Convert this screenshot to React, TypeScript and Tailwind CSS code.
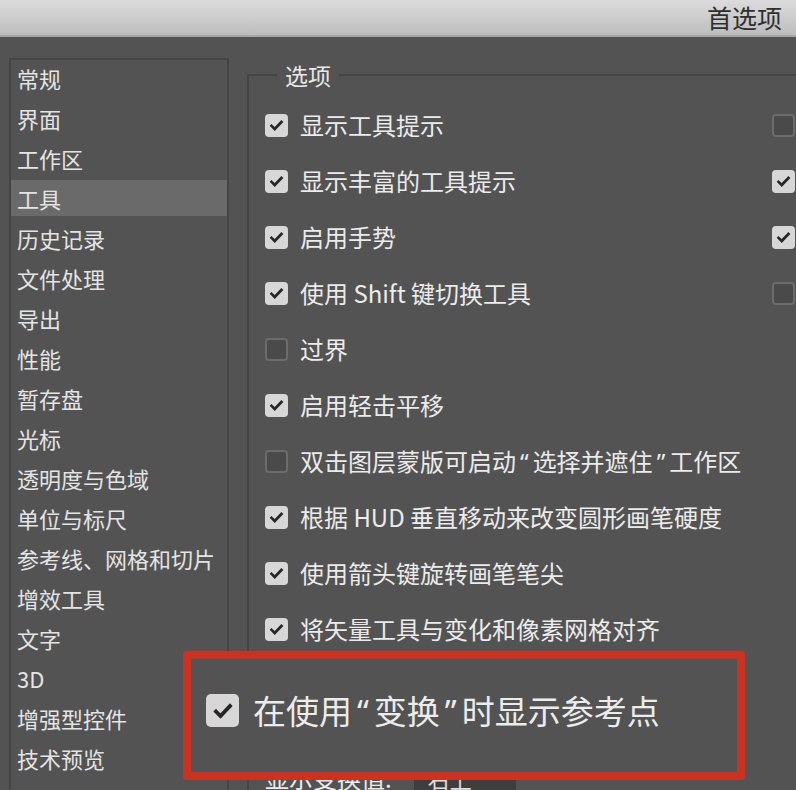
import React from 'react';

const listItems = [
  '常规', '界面', '工作区', '工具', '历史记录', '文件处理', '导出', '性能', '暂存盘',
  '光标', '透明度与色域', '单位与标尺', '参考线、网格和切片', '增效工具', '文字', '3D',
  '增强型控件', '技术预览',
];

const options: { label: string; checked: boolean; right?: boolean }[] = [
  { label: '显示工具提示', checked: true, right: false },
  { label: '显示丰富的工具提示', checked: true, right: true },
  { label: '启用手势', checked: true, right: true },
  { label: '使用 Shift 键切换工具', checked: true, right: false },
  { label: '过界', checked: false },
  { label: '启用轻击平移', checked: true },
  { label: '双击图层蒙版可启动“选择并遮住”工作区', checked: false },
  { label: '根据 HUD 垂直移动来改变圆形画笔硬度', checked: true },
  { label: '使用箭头键旋转画笔笔尖', checked: true },
  { label: '将矢量工具与变化和像素网格对齐', checked: true },
  { label: '在使用“变换”时显示参考点', checked: true },
];

// the CJK font sets quotes full width; the dialog uses tighter ones
const Label = ({ text, big }: { text: string; big?: boolean }) => (
  <>
    {text.split(/([“”])/).map((part, i) =>
      part === '“' || part === '”' ? (
        <span key={i} className={`font-['Noto_Sans',sans-serif] ${big ? 'px-[5px]' : 'px-[4px]'}`}>{part}</span>
      ) : (
        part
      )
    )}
  </>
);

const Check = ({ checked, big }: { checked: boolean; big?: boolean }) => {
  const size = big ? 'w-[33px] h-[33px] rounded-[5px]' : 'w-[23px] h-[23px] rounded-[4px]';
  if (!checked) {
    return <span className={`${size} shrink-0 border-2 border-[#6c6c6c] bg-[#4a4a4a]`} />;
  }
  return (
    <span className={`${size} shrink-0 bg-[#d7d7d7] flex items-center justify-center`}>
      <svg viewBox="0 0 24 24" className={big ? 'w-[24px] h-[24px]' : 'w-[17px] h-[17px]'}>
        <polyline points="5,12.5 9.5,17 19,7" fill="none" stroke="#262626" strokeWidth="3.8" strokeLinecap="square" />
      </svg>
    </span>
  );
};

export default function App() {
  return (
    <div className="relative w-[796px] h-[790px] overflow-hidden bg-[#535353] font-['Noto_Sans_CJK_SC',sans-serif]">
      <div className="h-[37px] border-b-2 border-[#a5a5a5] bg-linear-to-b from-[#dcdcdc] to-[#bdbdbd] flex items-center justify-end pr-[14px]">
        <span className="text-[25px] leading-none text-[#2f2f2f]">首选项</span>
      </div>

      <div className="flex pl-[9px] pt-[21px] gap-[18px]">
        <div className="w-[220px] h-[760px] shrink-0 border-2 border-[#454545] flex flex-col gap-1">
          {listItems.map((item) => (
            <div
              key={item}
              className={`h-9 px-[6px] flex items-center text-[22px] leading-none text-[#e4e4e4] ${item === '工具' ? 'bg-[#6a6a6a]' : ''}`}
            >
              {item}
            </div>
          ))}
        </div>

        <fieldset className="mt-[2px] w-[640px] shrink-0 border-2 border-[#454545] pl-[16px] pt-[7px]">
          <legend className="ml-[12px] px-[8px] text-[23px] leading-[30px] text-[#e8e8e8]">选项</legend>
          {options.map((o) => (
            <div key={o.label} className="h-14 flex items-center">
              <div className="w-[507px] flex items-center gap-[12px]">
                <Check checked={o.checked} />
                <span className="text-[24px] leading-none text-[#ebebeb] whitespace-nowrap">
                  <Label text={o.label} />
                </span>
              </div>
              {o.right !== undefined && <Check checked={o.right} />}
            </div>
          ))}
          <div className="mt-[45px] h-[40px] flex items-center gap-[22px]">
            <span className="text-[24px] leading-none text-[#ebebeb]">显示变换值:</span>
            <span className="w-[102px] h-[32px] bg-[#3e3e3e] flex items-center px-[14px] text-[22px] text-[#e0e0e0]">右上</span>
          </div>
        </fieldset>
      </div>

      <div className="absolute left-[183px] top-[651px] w-[562px] h-[129px] border-[8px] border-[#c93322] rounded-[4px] bg-[#535353] flex items-center pl-[15px] pb-[10px] gap-[14px]">
        <Check checked big />
        <span className="text-[33px] leading-none text-[#ececec] whitespace-nowrap">
          <Label text="在使用“变换”时显示参考点" big />
        </span>
      </div>
    </div>
  );
}
